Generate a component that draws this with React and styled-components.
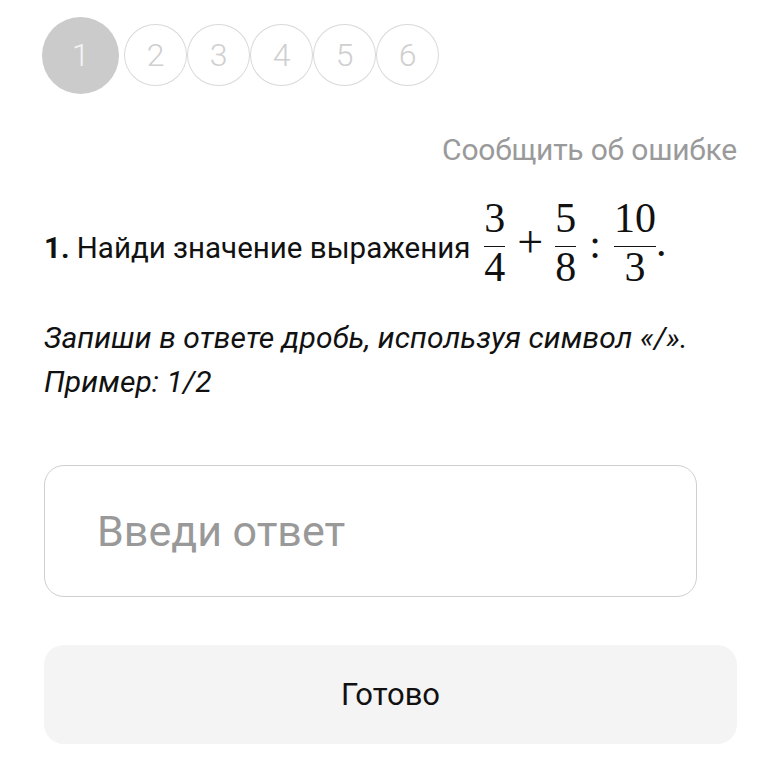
import React from "react";
import styled, { createGlobalStyle } from "styled-components";

const Global = createGlobalStyle`
  html, body { margin: 0; padding: 0; background: #fff; }
  body { font-family: Roboto, "Noto Sans", sans-serif; color: #111; }
  * { box-sizing: border-box; }
`;

const Page = styled.div`
  width: 781px;
  padding: 17px 44px 0 44px;
`;

const Steps = styled.div`
  display: flex;
  align-items: center;
  margin-left: -2px;
  height: 76px;
`;

const Step = styled.div`
  flex: none;
  display: flex;
  align-items: center;
  justify-content: center;
  width: ${(p) => (p.$active ? "77px" : "63px")};
  height: ${(p) => (p.$active ? "77px" : "62px")};
  margin-right: ${(p) => (p.$active ? "5px" : "0")};
  border-radius: 50%;
  background: ${(p) => (p.$active ? "#cbcbcb" : "#fff")};
  border: ${(p) => (p.$active ? "none" : "1.5px solid #d9d9d9")};
  color: ${(p) => (p.$active ? "#f4f4f4" : "#cfcfcf")};
  font-family: Roboto, sans-serif;
  font-weight: 300;
  font-size: 32px;
`;

const ReportRow = styled.div`
  display: flex;
  justify-content: flex-end;
  margin-top: 39px;
`;

const Report = styled.span`
  font-size: 30px;
  line-height: 36px;
  color: #9a9a9a;
  letter-spacing: -0.2px;
`;

const Task = styled.div`
  display: flex;
  align-items: center;
  margin-top: 34px;
  white-space: nowrap;
`;

const TaskText = styled.span`
  font-size: 29.5px;
  line-height: 36px;
  padding-top: 3px;
`;

const Num = styled.b`
  font-weight: 700;
`;

const Frac = styled.span`
  display: flex;
  flex-direction: column;
  align-items: center;
  padding-bottom: 6px;
  margin-left: ${(p) => p.$ml || "0"};
  font-family: "Liberation Serif", serif;
  font-size: 42px;
  line-height: 0.8;
`;

const FracPart = styled.span`
  display: block;
`;

const Bar = styled.span`
  align-self: stretch;
  height: 1.5px;
  background: #111;
  margin: 10px 0 4px;
`;

const Op = styled.span`
  font-family: "Liberation Serif", serif;
  font-size: ${(p) => p.$size || "42px"};
  line-height: 48px;
  padding-bottom: ${(p) => p.$pb || "0"};
  margin: 0 ${(p) => p.$m || "14px"};
`;

const Hint = styled.p`
  margin: 25px 0 0;
  font-style: italic;
  font-size: 30px;
  line-height: 44px;
  letter-spacing: 0.1px;
`;

const AnswerInput = styled.input`
  display: block;
  margin-top: 61px;
  width: 653px;
  height: 132px;
  border: 1.5px solid #cfcfcf;
  border-radius: 20px;
  padding: 0 52px;
  font-family: Roboto, sans-serif;
  font-size: 43px;
  color: #111;
  outline: none;
  background: #fff;
  &::placeholder { color: #999; }
`;

const Done = styled.button`
  display: flex;
  align-items: center;
  justify-content: center;
  margin-top: 48px;
  width: 693px;
  height: 99px;
  border: none;
  border-radius: 20px;
  background: #f4f4f4;
  font-family: Roboto, sans-serif;
  font-size: 31px;
  color: #111;
`;

export default function App() {
  return (
    <>
      <Global />
      <Page>
        <Steps>
          {[1, 2, 3, 4, 5, 6].map((n) => (
            <Step key={n} $active={n === 1}>{n}</Step>
          ))}
        </Steps>
        <ReportRow>
          <Report>Сообщить об ошибке</Report>
        </ReportRow>
        <Task>
          <TaskText>
            <Num>1.</Num> Найди значение выражения
          </TaskText>
          <Frac $ml="14px">
            <FracPart>3</FracPart>
            <Bar />
            <FracPart>4</FracPart>
          </Frac>
          <Op $size="46px" $pb="9px" $m="12px">+</Op>
          <Frac>
            <FracPart>5</FracPart>
            <Bar />
            <FracPart>8</FracPart>
          </Frac>
          <Op $pb="4px" $m="13px">:</Op>
          <Frac>
            <FracPart>10</FracPart>
            <Bar />
            <FracPart>3</FracPart>
          </Frac>
          <Op $pb="9px" $m="0 0 0 2px">.</Op>
        </Task>
        <Hint>
          Запиши в ответе дробь, используя символ «/».
          <br />
          Пример: 1/2
        </Hint>
        <AnswerInput placeholder="Введи ответ" />
        <Done>Готово</Done>
      </Page>
    </>
  );
}
